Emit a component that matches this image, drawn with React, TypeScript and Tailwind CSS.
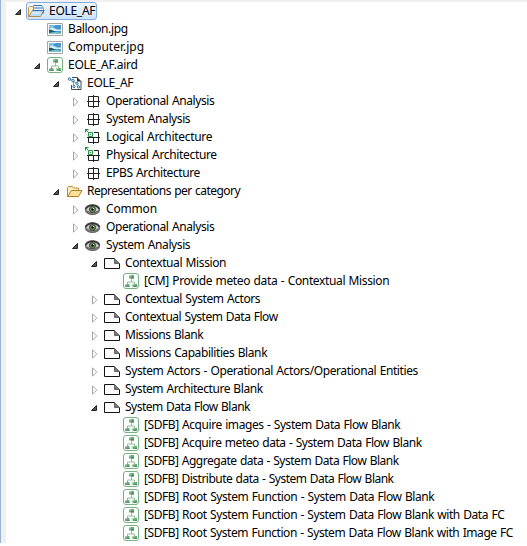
import { useLayoutEffect, useRef, useState } from 'react';

type IconName = 'project' | 'image' | 'aird' | 'model' | 'arch' | 'archLink' | 'folder' | 'eye' | 'page';
type Row = { level: number; state: 'open' | 'closed' | 'leaf'; icon: IconName; label: string; width: number; selected?: boolean };

const rows: Row[] = [
  { level: 0, state: 'open', icon: 'project', label: 'EOLE_AF', width: 46, selected: true },
  { level: 1, state: 'leaf', icon: 'image', label: 'Balloon.jpg', width: 60 },
  { level: 1, state: 'leaf', icon: 'image', label: 'Computer.jpg', width: 76 },
  { level: 1, state: 'open', icon: 'aird', label: 'EOLE_AF.aird', width: 70 },
  { level: 2, state: 'open', icon: 'model', label: 'EOLE_AF', width: 46 },
  { level: 3, state: 'closed', icon: 'arch', label: 'Operational Analysis', width: 108 },
  { level: 3, state: 'closed', icon: 'arch', label: 'System Analysis', width: 84 },
  { level: 3, state: 'closed', icon: 'archLink', label: 'Logical Architecture', width: 106 },
  { level: 3, state: 'closed', icon: 'archLink', label: 'Physical Architecture', width: 111 },
  { level: 3, state: 'closed', icon: 'arch', label: 'EPBS Architecture', width: 94 },
  { level: 2, state: 'open', icon: 'folder', label: 'Representations per category', width: 153 },
  { level: 3, state: 'closed', icon: 'eye', label: 'Common', width: 51 },
  { level: 3, state: 'closed', icon: 'eye', label: 'Operational Analysis', width: 108 },
  { level: 3, state: 'open', icon: 'eye', label: 'System Analysis', width: 84 },
  { level: 4, state: 'open', icon: 'page', label: 'Contextual Mission', width: 101 },
  { level: 5, state: 'leaf', icon: 'aird', label: '[CM] Provide meteo data - Contextual Mission', width: 245 },
  { level: 4, state: 'closed', icon: 'page', label: 'Contextual System Actors', width: 135 },
  { level: 4, state: 'closed', icon: 'page', label: 'Contextual System Data Flow', width: 153 },
  { level: 4, state: 'closed', icon: 'page', label: 'Missions Blank', width: 78 },
  { level: 4, state: 'closed', icon: 'page', label: 'Missions Capabilities Blank', width: 142 },
  { level: 4, state: 'closed', icon: 'page', label: 'System Actors - Operational Actors/Operational Entities', width: 293 },
  { level: 4, state: 'closed', icon: 'page', label: 'System Architecture Blank', width: 138 },
  { level: 4, state: 'open', icon: 'page', label: 'System Data Flow Blank', width: 125 },
  { level: 5, state: 'leaf', icon: 'aird', label: '[SDFB] Acquire images - System Data Flow Blank', width: 256 },
  { level: 5, state: 'leaf', icon: 'aird', label: '[SDFB] Acquire meteo data - System Data Flow Blank', width: 278 },
  { level: 5, state: 'leaf', icon: 'aird', label: '[SDFB] Aggregate data - System Data Flow Blank', width: 255 },
  { level: 5, state: 'leaf', icon: 'aird', label: '[SDFB] Distribute data - System Data Flow Blank', width: 250 },
  { level: 5, state: 'leaf', icon: 'aird', label: '[SDFB] Root System Function - System Data Flow Blank', width: 290 },
  { level: 5, state: 'leaf', icon: 'aird', label: '[SDFB] Root System Function - System Data Flow Blank with Data FC', width: 360 },
  { level: 5, state: 'leaf', icon: 'aird', label: '[SDFB] Root System Function - System Data Flow Blank with Image FC', width: 369 },
];

function Icon({ name }: { name: IconName }) {
  return (
    <svg width="18" height="18" viewBox="0 0 18 18" className="block shrink-0 overflow-visible">
      {name === 'project' && (
        <g strokeLinejoin="round">
          <path d="M1.5 14.500V5.500l1-1h3l1 1.500v8.500z" fill="#fdf0c4" stroke="#c79a4d" />
          <path d="M6.500 3.500h8l2 2v6h-10z" fill="#eef6fe" stroke="#88a9cf" />
          <path d="M7 3.500h8M7 6h9" stroke="#3f6fae" />
          <path d="M1.500 14.500l4-6h11.500l-3.500 6z" fill="#bcdcf5" stroke="#b58b45" />
          <path d="M5.500 8.500h11.500l-1.500 2.600" fill="none" stroke="#356baa" />
          <path d="M4.500 11h9" stroke="#e9f6ff" />
        </g>
      )}
      {name === 'image' && (
        <g>
          <path d="M1.500 3.500h15v12h-15z" fill="#fff" stroke="#a6a6a6" />
          <path d="M3 5h12v9H3z" fill="#4697cb" />
          <path d="M3 5h7L7 7 3 8z" fill="#7fc0e6" />
          <path d="M3 9q3-3 5-1l3 1.500h4V11H3z" fill="#d2f0f8" />
          <path d="M3 9.500l3 .5 4 2 5 .5V13H3z" fill="#1d5a66" />
          <path d="M3 13q6-1.500 12-.5V14H3z" fill="#7fc3cd" />
        </g>
      )}
      {name === 'aird' && (
        <g>
          <rect x="1.500" y="1.500" width="15" height="15" rx="2.500" fill="#fff" stroke="#77b181" />
          <path d="M9.500 7v3M5.500 12v-2h7v2" fill="none" stroke="#93bd98" />
          <path d="M7 3h5v3.500H7zM3 12h4.500v3H3zM10.500 12H15v3h-4.500z" fill="#69ab74" />
          <path d="M7 3h2v1.500H7zM3 12h2v1H3zM10.500 12h2v1h-2z" fill="#acd3b1" />
          <path d="M9 5h3v1.500H9zM5 14h2.500v1H5zM12.500 14H15v1h-2.500z" fill="#448b50" />
        </g>
      )}
      {name === 'model' && (
        <g>
          <path d="M6.500 3.500h6l3.500 3.500v8.500h-9.500z" fill="#fff" />
          <path d="M7 3.500h5.500M16 7v8.500H6.500V11" fill="none" stroke="#3f4b56" />
          <path d="M12 3v4.500h4.500z" fill="#26323e" />
          <path d="M4.500 5.500l3.500 1 3.500 3 2.500 3M8 6.500l1 6" fill="none" stroke="#3b77a7" strokeWidth=".8" />
          <g fill="#c7e5f5" stroke="#286698" strokeWidth=".8">
            <circle cx="4.500" cy="5" r="1.300" /><circle cx="8" cy="6.500" r="1.300" />
            <circle cx="12" cy="9.500" r="1.200" /><circle cx="9" cy="12.500" r="1.200" />
            <circle cx="13.500" cy="13" r="1.200" />
          </g>
        </g>
      )}
      {(name === 'arch' || name === 'archLink') && (
        <g stroke="#222" fill="none">
          <path d="M4.500 4.500h10v10h-10zM9.500 3v13M3 9.500h13" />
          {name === 'archLink' && (
            <g stroke="#22933f">
              <path d="M4 3h6v6H4z" fill="#fff" stroke="none" />
              <path d="M4.500 4.500h4v4h-4z" fill="#f0fbef" />
              <path d="M6 6h1v1H6z" fill="#22933f" stroke="none" />
              <path d="M1 1.500h3.500M1.500 1v3.500M1.500 1.500l3 3" />
            </g>
          )}
        </g>
      )}
      {name === 'folder' && (
        <g strokeLinejoin="round">
          <path d="M2.500 14.500v-9l1-1h4l1 1.500h5v3" fill="#fff0bd" stroke="#c08b3c" />
          <path d="M2.500 14.500l4-6h10.500l-3.500 6z" fill="#ffe19a" stroke="#b57b29" />
        </g>
      )}
      {name === 'eye' && (
        <g>
          <ellipse cx="8.500" cy="9.500" rx="7" ry="4.800" fill="#c8c8c8" stroke="#666" strokeWidth="1.500" />
          <path d="M1.500 9Q4 5.500 8.500 5.500T15.500 9" fill="none" stroke="#333" strokeWidth="1.600" />
          <path d="M3 11q5 4 11 0" fill="none" stroke="#555" />
          <circle cx="8.500" cy="9.500" r="3" fill="#71955f" stroke="#344030" />
          <circle cx="8.500" cy="9.500" r="1.300" fill="#151515" />
          <path d="M9 8h1v1H9z" fill="#e1f3db" />
        </g>
      )}
      {name === 'page' && (
        <g>
          <path d="M1.500 4.500h10l5 5v5h-15z" fill="#fff" stroke="#111" />
          <path d="M11.500 4.500v5h5z" fill="#777" stroke="#666" />
        </g>
      )}
    </svg>
  );
}

function Label({ text, width }: { text: string; width: number }) {
  const ref = useRef<HTMLSpanElement>(null);
  const [spacing, setSpacing] = useState(0);
  useLayoutEffect(() => {
    if (ref.current) setSpacing((width - ref.current.offsetWidth) / text.length);
  }, [text, width]);
  return <span ref={ref} className="whitespace-pre [word-spacing:0.7px]" style={{ letterSpacing: spacing }}>{text}</span>;
}

function Twisty({ state }: { state: Row['state'] }) {
  return (
    <svg width="9" height="18" viewBox="0 0 9 18" className="block shrink-0">
      {state === 'open' && <path d="M6.500 7.500v5H1.500z" fill="#555" stroke="#262626" />}
      {state === 'closed' && <path d="M2.500 5.800v8.400l4.200-4.200z" fill="#fff" stroke="#a6a6a6" />}
    </svg>
  );
}

export default function App() {
  return (
    <div className="h-[546px] w-[527px] overflow-hidden bg-white">
      <div className="flex h-[543px] border-l border-[#99b4d1] bg-[#f0f0f0]">
        <div className="ml-[5px] mt-0.5 flex-1 bg-white">
          <ul className="font-['Noto_Sans','Open_Sans',sans-serif] text-xs leading-[18px] text-black">
            {rows.map((row, index) => (
              <li key={index} className="flex h-[18px] items-center pl-2" style={{ marginLeft: row.level * 19 }}>
                <Twisty state={row.state} />
                <div className={row.selected ? 'ml-[3px] flex h-[18px] items-center rounded-[3px] border border-[#84acdd] bg-gradient-to-b from-[#f0f7ff] to-[#cce3fe] pr-px' : 'ml-1 flex items-center pr-px'}>
                  <Icon name={row.icon} />
                  <div className="ml-1 flex"><Label text={row.label} width={row.width} /></div>
                </div>
              </li>
            ))}
          </ul>
        </div>
      </div>
    </div>
  );
}
